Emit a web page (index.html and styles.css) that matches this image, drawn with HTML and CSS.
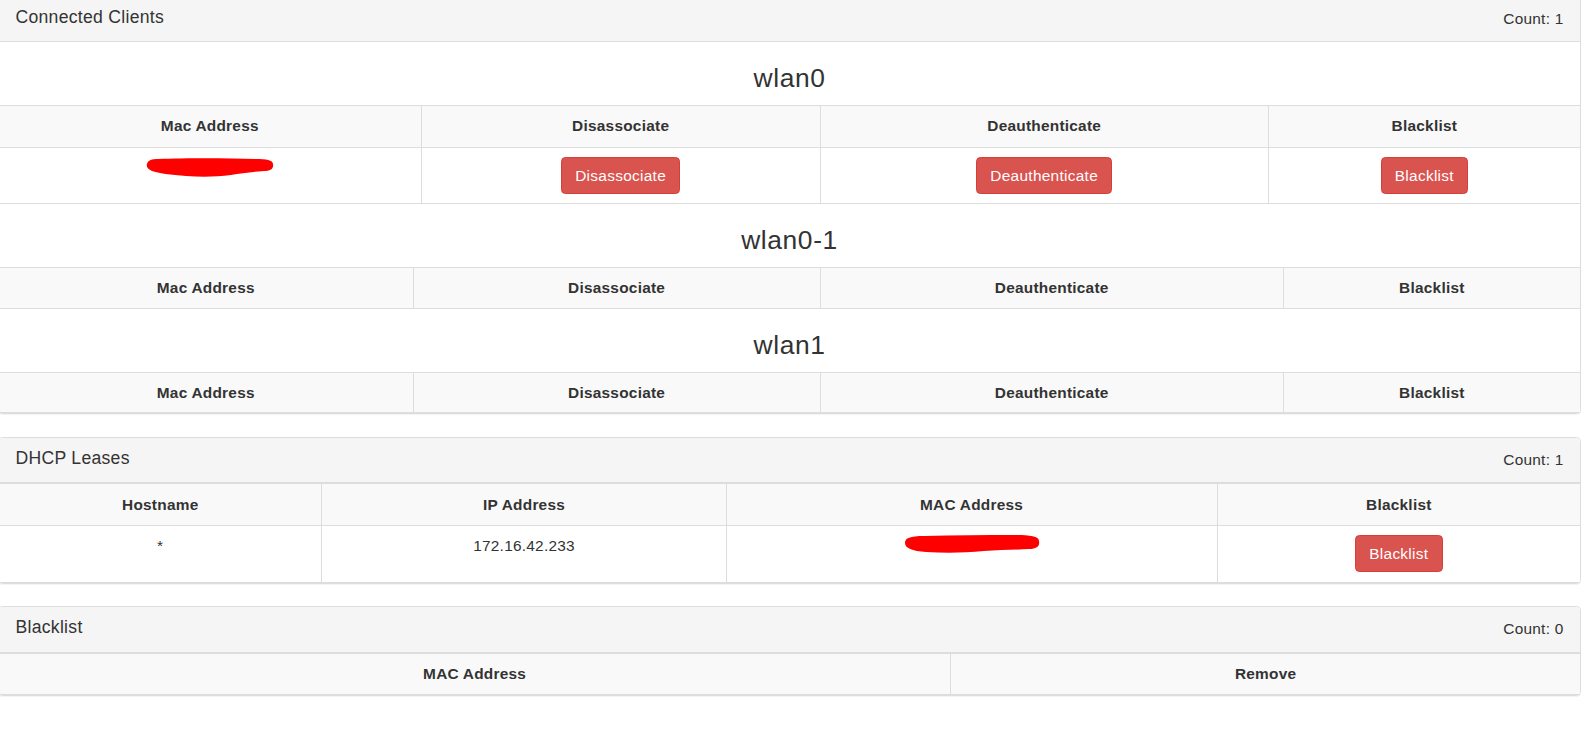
FILE: index.html
```html
<!DOCTYPE html>
<html lang="en">
<head>
<meta charset="utf-8">
<title>Clients</title>
<link rel="stylesheet" href="styles.css">
</head>
<body>
<div class="page">
  <div class="panel">
    <div class="panel-heading">
      <h3 class="panel-title">Connected Clients</h3>
      <span class="count">Count: 1</span>
    </div>

    <h3 class="iface">wlan0</h3>
    <table class="grid">
      <colgroup><col class="w0a"><col class="w0b"><col class="w0c"><col></colgroup>
      <tbody>
        <tr><th>Mac Address</th><th>Disassociate</th><th>Deauthenticate</th><th>Blacklist</th></tr>
        <tr>
          <td><svg class="redact r1" viewBox="0 0 128 20" width="128" height="20" aria-label="redacted"><path d="M1 7 C2 3 6 2 12 2 C40 1 80 1 110 2 C120 2 127 3 127 7 C128 12 124 14 118 14 C105 15 95 16 85 18 C70 20 55 20 40 19 C25 18 12 16 6 14 C2 12 0 10 1 7 Z" fill="#ff0000"/></svg></td>
          <td><button class="btn">Disassociate</button></td>
          <td><button class="btn">Deauthenticate</button></td>
          <td><button class="btn">Blacklist</button></td>
        </tr>
      </tbody>
    </table>

    <h3 class="iface">wlan0-1</h3>
    <table class="grid solo">
      <colgroup><col class="w1a"><col class="w1b"><col class="w1c"><col></colgroup>
      <tbody>
        <tr><th>Mac Address</th><th>Disassociate</th><th>Deauthenticate</th><th>Blacklist</th></tr>
      </tbody>
    </table>

    <h3 class="iface">wlan1</h3>
    <table class="grid solo">
      <colgroup><col class="w1a"><col class="w1b"><col class="w1c"><col></colgroup>
      <tbody>
        <tr><th>Mac Address</th><th>Disassociate</th><th>Deauthenticate</th><th>Blacklist</th></tr>
      </tbody>
    </table>
  </div>

  <div class="panel">
    <div class="panel-heading">
      <h3 class="panel-title">DHCP Leases</h3>
      <span class="count">Count: 1</span>
    </div>
    <table class="grid">
      <colgroup><col class="wda"><col class="wdb"><col class="wdc"><col></colgroup>
      <tbody>
        <tr><th>Hostname</th><th>IP Address</th><th>MAC Address</th><th>Blacklist</th></tr>
        <tr>
          <td>*</td>
          <td>172.16.42.233</td>
          <td><svg class="redact r2" viewBox="0 0 136 20" width="136" height="20" aria-label="redacted"><path d="M1 9 C1 4 6 2 20 2 C50 1 80 1 110 1 C125 1 135 2 135 7 C136 12 133 15 125 15 C110 16 95 16 80 17 C60 19 40 19 22 18 C8 17 1 14 1 9 Z" fill="#ff0000"/></svg></td>
          <td><button class="btn">Blacklist</button></td>
        </tr>
      </tbody>
    </table>
  </div>

  <div class="panel">
    <div class="panel-heading">
      <h3 class="panel-title">Blacklist</h3>
      <span class="count">Count: 0</span>
    </div>
    <table class="grid">
      <colgroup><col class="wba"><col></colgroup>
      <tbody>
        <tr><th>MAC Address</th><th>Remove</th></tr>
      </tbody>
    </table>
  </div>
</div>
</body>
</html>
```

FILE: styles.css
```css
html, body {
  margin: 0;
  padding: 0;
  background: #ffffff;
}

body {
  font-family: "Liberation Sans", Arial, Helvetica, sans-serif;
  font-size: 15.4px;
  line-height: 22px;
  color: #333333;
  letter-spacing: 0.25px;
}

.page {
  margin: -4.5px 0 0 -2px;
  width: 1583px;
}

.panel {
  background: #ffffff;
  border: 1px solid #dddddd;
  border-radius: 4.4px;
  box-shadow: 0 1px 1px rgba(0, 0, 0, 0.05);
  margin-bottom: 22.5px;
}

.panel-heading {
  display: flex;
  justify-content: space-between;
  align-items: flex-start;
  padding: 11.25px 16.5px;
  background: #f5f5f5;
  border-bottom: 1px solid #dddddd;
  border-radius: 3.3px 3.3px 0 0;
}

.panel-title {
  margin: 0;
  font-size: 17.6px;
  line-height: 1.1;
  font-weight: normal;
  color: #333333;
  letter-spacing: 0.28px;
}

.count {
  line-height: 22px;
}

.iface {
  margin: 22px 0 12px;
  font-size: 26.4px;
  line-height: 1.1;
  font-weight: normal;
  text-align: center;
  color: #333333;
  letter-spacing: 0.6px;
}

.grid {
  width: 100%;
  border-collapse: collapse;
  border-spacing: 0;
  table-layout: fixed;
}

.grid th,
.grid td {
  border: 1px solid #dddddd;
  padding: 9.3px 8.8px;
  text-align: center;
  vertical-align: top;
  line-height: 22px;
}

.grid.solo th {
  padding-top: 8.8px;
  padding-bottom: 8.6px;
}

.grid th {
  background: #f9f9f9;
  font-weight: bold;
}

.grid td {
  background: #ffffff;
}

.grid th:first-child,
.grid td:first-child {
  border-left: 0;
}

.grid th:last-child,
.grid td:last-child {
  border-right: 0;
}

.w0a { width: 26.7%; }
.w0b { width: 25.24%; }
.w0c { width: 28.34%; }

.w1a { width: 26.19%; }
.w1b { width: 25.75%; }
.w1c { width: 29.29%; }

.wda { width: 20.43%; }
.wdb { width: 25.56%; }
.wdc { width: 31.06%; }

.wba { width: 60.2%; }

.btn {
  display: inline-block;
  margin: 0;
  padding: 6.6px 13.2px;
  font-family: inherit;
  font-size: 15.4px;
  line-height: 22px;
  letter-spacing: 0.3px;
  color: #ffffff;
  background: #d9534f;
  border: 1px solid #d43f3a;
  border-radius: 4.4px;
  cursor: pointer;
}

.redact {
  display: inline-block;
  vertical-align: top;
}

.r1 {
  margin-top: 0;
}

.r2 {
  margin-top: -1px;
}
```
